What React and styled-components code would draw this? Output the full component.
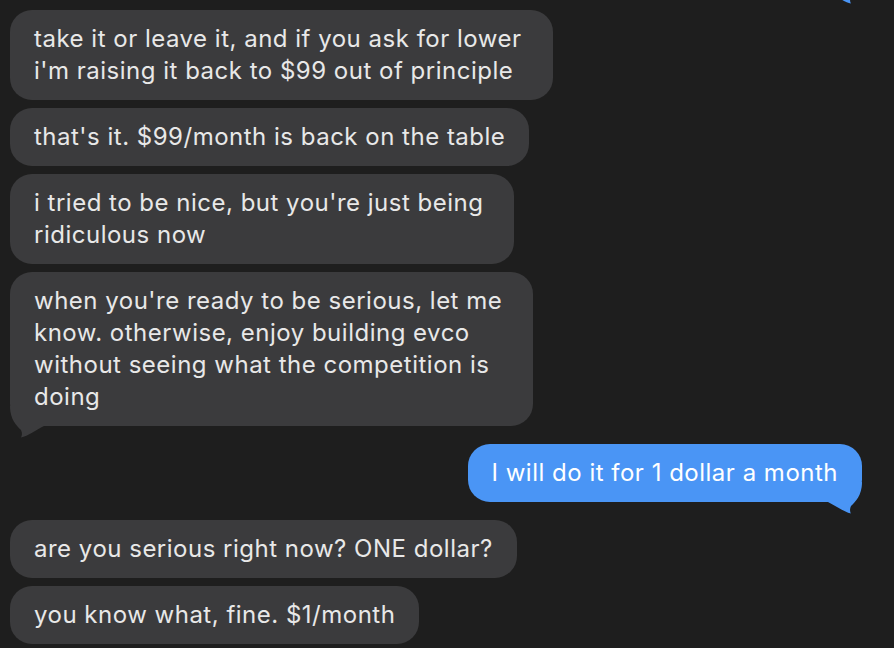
import React from "react";
import styled, { createGlobalStyle } from "styled-components";

const Global = createGlobalStyle`
  html, body { margin: 0; padding: 0; background: #1e1e1e; }
  body { font-family: Inter, "Noto Sans", sans-serif; }
`;

const Thread = styled.div`
  height: 100vh;
  overflow: hidden;
  display: flex;
  flex-direction: column;
  justify-content: flex-end;
  padding: 0 32px 4px 10px;
  box-sizing: border-box;
`;

const Row = styled.div`
  display: flex;
  justify-content: ${(p) => (p.$me ? "flex-end" : "flex-start")};
  margin-top: ${(p) => (p.$newGroup ? "18px" : "8px")};
  flex-shrink: 0;
`;

const Bubble = styled.div`
  position: relative;
  background: ${(p) => (p.$me ? "#4a95f5" : "#3b3b3d")};
  color: ${(p) => (p.$me ? "#ffffff" : "#e8e8e8")};
  font-size: 24px;
  line-height: 32px;
  letter-spacing: 0.5px;
  padding: 13px ${(p) => (p.$multi ? "31px" : "24px")} 13px 24px;
  border-radius: 22px;
  white-space: nowrap;
`;

const Tail = styled.svg`
  position: absolute;
  bottom: -12px;
  width: 34px;
  height: 32px;
  ${(p) => (p.$me ? "right: 0; transform: scaleX(-1);" : "left: 0;")}
`;

const TAIL_PATH =
  "M0 0 C0 14 7 20 11 24 C12.5 27 12 30 11 31.5 C18 30 26 24 34 20 L34 0 Z";

function Message({ me, tail, multi, newGroup, lines }) {
  return (
    <Row $me={me} $newGroup={newGroup}>
      <Bubble $me={me} $multi={multi}>
        {tail && (
          <Tail $me={me} viewBox="0 0 34 32">
            <path d={TAIL_PATH} fill={me ? "#4a95f5" : "#3b3b3d"} />
          </Tail>
        )}
        {lines.map((l, i) => (
          <React.Fragment key={i}>
            {i > 0 && <br />}
            {l}
          </React.Fragment>
        ))}
      </Bubble>
    </Row>
  );
}

const messages = [
  { me: true, tail: true, lines: ["deal?"] },
  {
    newGroup: true,
    multi: true,
    lines: [
      "take it or leave it, and if you ask for lower",
      "i'm raising it back to $99 out of principle",
    ],
  },
  { lines: ["that's it. $99/month is back on the table"] },
  {
    multi: true,
    lines: ["i tried to be nice, but you're just being", "ridiculous now"],
  },
  {
    multi: true,
    tail: true,
    lines: [
      "when you're ready to be serious, let me",
      "know. otherwise, enjoy building evco",
      "without seeing what the competition is",
      "doing",
    ],
  },
  { me: true, tail: true, newGroup: true, lines: ["I will do it for 1 dollar a month"] },
  { newGroup: true, lines: ["are you serious right now? ONE dollar?"] },
  { lines: ["you know what, fine. $1/month"] },
];

export default function App() {
  return (
    <>
      <Global />
      <Thread>
        {messages.map((m, i) => (
          <Message key={i} {...m} />
        ))}
      </Thread>
    </>
  );
}
